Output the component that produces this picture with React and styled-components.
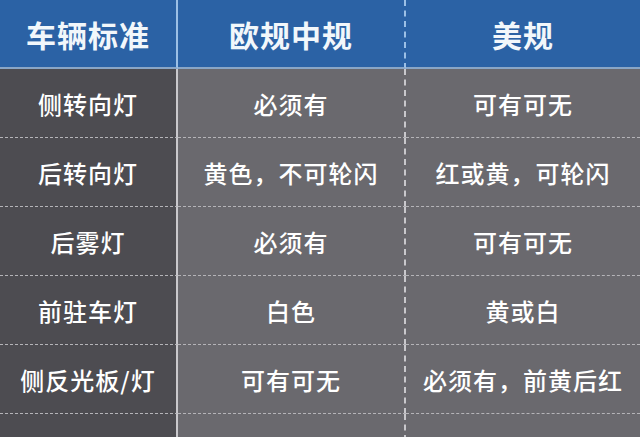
import React from "react";
import styled, { createGlobalStyle } from "styled-components";

const Global = createGlobalStyle`
  html, body { margin: 0; padding: 0; overflow: hidden; background: #67666b; }
  body { font-family: "Noto Sans CJK SC", "Noto Sans", sans-serif; }
`;

const Table = styled.div`
  display: grid;
  grid-template-columns: 178px 228px 234px;
  width: 640px;
  height: 437px;
  overflow: hidden;
  grid-auto-rows: 69px;
  background: #67666b;
`;

const HeadCell = styled.div`
  background: #2b62a5;
  color: #f2f7fb;
  font-size: 30px;
  font-weight: 700;
  display: flex;
  align-items: center;
  justify-content: center;
  letter-spacing: 1px;
  border-bottom: 2px solid #8aa6c6;
  box-sizing: border-box;
  border-right: ${(p) =>
    p.$col === 0 ? "2px solid #9cc0e6" : p.$col === 1 ? "2px dashed #9cc0e6" : "none"};
`;

const Cell = styled.div`
  background: ${(p) => (p.$col === 0 ? "#4d4c51" : "#6a696e")};
  color: #ffffff;
  font-size: 24px;
  font-weight: 500;
  display: flex;
  align-items: center;
  justify-content: center;
  letter-spacing: 1px;
  box-sizing: border-box;
  border-bottom: 1px dashed #b5b4b8;
  border-right: ${(p) =>
    p.$col === 0 ? "2px solid #c9c8cc" : p.$col === 1 ? "2px dashed #c9c8cc" : "none"};
`;

const head = ["车辆标准", "欧规中规", "美规"];
const rows = [
  ["侧转向灯", "必须有", "可有可无"],
  ["后转向灯", "黄色，不可轮闪", "红或黄，可轮闪"],
  ["后雾灯", "必须有", "可有可无"],
  ["前驻车灯", "白色", "黄或白"],
  ["侧反光板/灯", "可有可无", "必须有，前黄后红"],
  ["后牌照灯", "白色", "白色"],
];

export default function App() {
  return (
    <>
      <Global />
      <Table>
        {head.map((h, i) => (
          <HeadCell key={h} $col={i}>{h}</HeadCell>
        ))}
        {rows.map((r, ri) =>
          r.map((c, ci) => (
            <Cell key={`${ri}-${ci}`} $col={ci}>{c}</Cell>
          ))
        )}
      </Table>
    </>
  );
}
